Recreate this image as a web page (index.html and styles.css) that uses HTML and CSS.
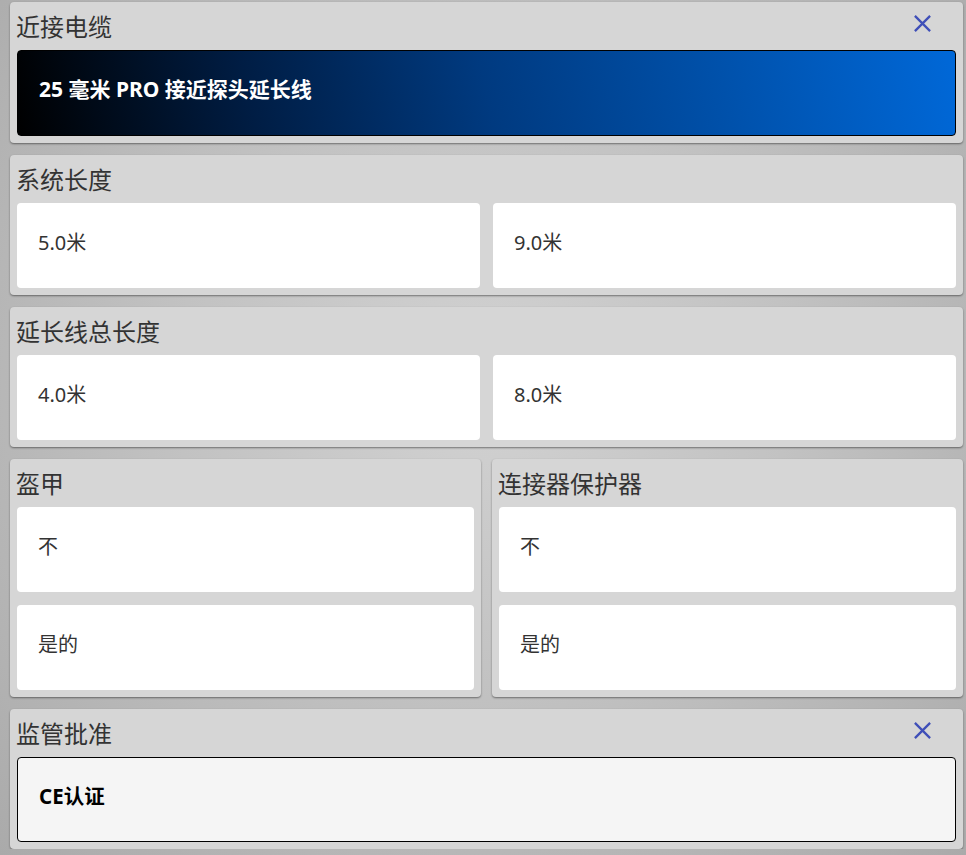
FILE: index.html
```html
<!DOCTYPE html>
<html>

<head>
    <title>配置</title>
    <link rel="stylesheet" href="styles.css">
</head>

<body>
    <div class="config">
        <div class="panel">
            <div class="panel-head">
                <span class="panel-title">近接电缆</span>
                <svg class="close-btn" viewBox="0 0 20 20" width="20" height="20">
                    <path d="M2 2 L18 18 M18 2 L2 18" />
                </svg>
            </div>
            <div class="option option-selected">25 毫米 PRO 接近探头延长线</div>
        </div>

        <div class="panel">
            <div class="panel-head">
                <span class="panel-title">系统长度</span>
            </div>
            <div class="options two-col">
                <div class="option">5.0米</div>
                <div class="option">9.0米</div>
            </div>
        </div>

        <div class="panel">
            <div class="panel-head">
                <span class="panel-title">延长线总长度</span>
            </div>
            <div class="options two-col">
                <div class="option">4.0米</div>
                <div class="option">8.0米</div>
            </div>
        </div>

        <div class="panel-row">
            <div class="panel">
                <div class="panel-head">
                    <span class="panel-title">盔甲</span>
                </div>
                <div class="options stacked">
                    <div class="option">不</div>
                    <div class="option">是的</div>
                </div>
            </div>
            <div class="panel">
                <div class="panel-head">
                    <span class="panel-title">连接器保护器</span>
                </div>
                <div class="options stacked">
                    <div class="option">不</div>
                    <div class="option">是的</div>
                </div>
            </div>
        </div>

        <div class="panel">
            <div class="panel-head">
                <span class="panel-title">监管批准</span>
                <svg class="close-btn" viewBox="0 0 20 20" width="20" height="20">
                    <path d="M2 2 L18 18 M18 2 L2 18" />
                </svg>
            </div>
            <div class="option option-checked">CE认证</div>
        </div>
    </div>
</body>

</html>
```

FILE: styles.css
```css
html {
    min-height: 100%;
    background: radial-gradient(ellipse at 50% 45%, #d2d2d2 0%, #c2c2c2 45%, #aaaaaa 100%);
}

body {
    margin: 0;
    padding: 2px 3px 0 10px;
    font-family: "Noto Sans", "Noto Sans CJK SC", sans-serif;
    color: #333;
}

.config {
    display: flex;
    flex-direction: column;
    gap: 12px;
}

.panel {
    background-color: #d6d6d6;
    border-radius: 4px;
    padding: 0 7px 7px 7px;
    box-shadow: 0 1px 2px rgba(0, 0, 0, 0.45);
}

.panel-head {
    height: 48px;
    display: flex;
    align-items: center;
    justify-content: space-between;
    padding-top: 2px;
    box-sizing: border-box;
}

.panel-title {
    font-size: 24px;
    line-height: 30px;
    margin-left: -1px;
}

.close-btn {
    width: 19px;
    height: 19px;
    margin-right: 24px;
    margin-top: -8px;
    stroke: #3f4fb8;
    stroke-width: 2.4;
    fill: none;
}

.panel-row {
    display: grid;
    grid-template-columns: 1fr 1fr;
    gap: 11px;
}

.options {
    display: grid;
}

.two-col {
    grid-template-columns: 1fr 1fr;
    gap: 13px;
}

.stacked {
    grid-template-columns: 1fr;
    gap: 13px;
}

.option {
    height: 85px;
    box-sizing: border-box;
    display: flex;
    align-items: center;
    padding: 0 0 9px 21px;
    background-color: #fff;
    border-radius: 4px;
    font-size: 20px;
    color: #333;
}

.option-selected {
    height: 86px;
    border: 1px solid #000;
    background: linear-gradient(78deg, #000 0%, #001d44 25%, #003a80 50%, #0051ab 75%, #0068d8 100%);
    color: #fff;
    font-weight: bold;
    font-size: 21px;
    padding-bottom: 10px;
}

.option-checked {
    border: 1px solid #000;
    background-color: #f5f5f5;
    color: #000;
    font-weight: bold;
    font-size: 20.5px;
}
```
